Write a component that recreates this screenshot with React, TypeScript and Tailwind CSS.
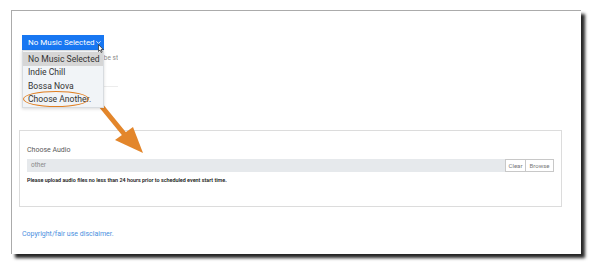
import { ChevronDown } from 'lucide-react';

const options = ['No Music Selected', 'Indie Chill', 'Bossa Nova', 'Choose Another.'];

function MusicSelect() {
  return (
    <div className="relative w-[82px]">
      <button className="flex h-[15px] w-[82px] items-center justify-between bg-[#1877f2] pl-[6px] pr-[2px] text-[8px] leading-none text-white">
        <span>No Music Selected</span>
        <ChevronDown size={7} strokeWidth={3} className="text-white" />
      </button>

      {/* open menu */}
      <ul className="absolute left-0 top-full z-10 w-[82px] border border-[#d8dce0] bg-[#f1f4f7] py-[1px] text-[8.6px] leading-none text-[#333] shadow-[0_1px_3px_rgba(0,0,0,0.15)]">
        {options.map((o, i) => (
          <li
            key={o}
            className={`flex h-[13.6px] items-center whitespace-nowrap pl-[5px] ${i === 0 ? 'bg-[#d6d6d6]' : ''}`}
          >
            {o}
          </li>
        ))}
      </ul>

      {/* annotation ring */}
      <div className="pointer-events-none absolute left-[1px] top-[56px] z-20 h-[16px] w-[66px] rounded-[50%] border-[1.5px] border-[#e07f22]" />

      {/* mouse pointer */}
      <svg className="absolute left-[76px] top-[9px] z-20" width="6" height="9" viewBox="0 0 6 9">
        <path d="M0.5 0.5 L0.5 7.5 L2 6 L3.2 8.5 L4.2 8 L3.1 5.6 L5.3 5.6 Z" fill="#fff" stroke="#222" strokeWidth="0.7" />
      </svg>
    </div>
  );
}

export default function App() {
  return (
    <div className="relative h-[274px] w-[600px] overflow-hidden bg-white" style={{ fontFamily: 'Roboto, "Liberation Sans", sans-serif' }}>
      <div className="ml-[11px] mt-[10px] h-[244px] w-[570px] border-l-[1.5px] border-t-[1.5px] border-[#ababab] bg-white shadow-[4px_4px_3px_rgba(0,0,0,0.85)]">
        <div className="pl-[10px] pt-[24px]">
          <MusicSelect />
          <div className="mt-[4px] w-[96px] overflow-hidden whitespace-nowrap text-[6.5px] leading-[8px] text-[#8a8a8a]">
            Select background music to be streamed during your event.
          </div>
          <div className="mt-[24px] h-px w-[96px] bg-[#ececec]" />
        </div>

        <div className="ml-[7px] mt-[43px] h-[77px] w-[543px] border border-[#dcdcdc] px-[7px] pt-[15px]">
          <div className="text-[7px] leading-[8px] text-[#5a5a5a]">Choose Audio</div>
          <div className="mt-[5px] flex h-[13px]">
            <div className="flex flex-1 items-center bg-[#e6e9ec] pl-[4px] text-[6.5px] text-[#8a8a8a]">other</div>
            <button className="flex w-[21px] items-center justify-center border border-[#c8c8c8] bg-white text-[6px] text-[#777]">Clear</button>
            <button className="flex w-[28px] items-center justify-center border border-l-0 border-[#c8c8c8] bg-white text-[6px] text-[#777]">Browse</button>
          </div>
          <p className="mt-[5px] text-[5.4px] font-semibold leading-[6px] text-[#222]">
            Please upload audio files no less than 24 hours prior to scheduled event start time.
          </p>
        </div>

        <a className="ml-[10px] mt-[23px] block text-[7px] leading-[8px] text-[#4a8fe0]" href="#">
          Copyright/fair use disclaimer.
        </a>
      </div>

      {/* annotation arrow */}
      <svg className="pointer-events-none absolute left-[94px] top-[98px]" width="56" height="62" viewBox="0 0 56 62">
        <line x1="4" y1="4" x2="31" y2="37" stroke="#e3862b" strokeWidth="5" strokeLinecap="round" />
        <polygon points="21,42 39,29 49,55" fill="#e3862b" />
      </svg>
    </div>
  );
}
